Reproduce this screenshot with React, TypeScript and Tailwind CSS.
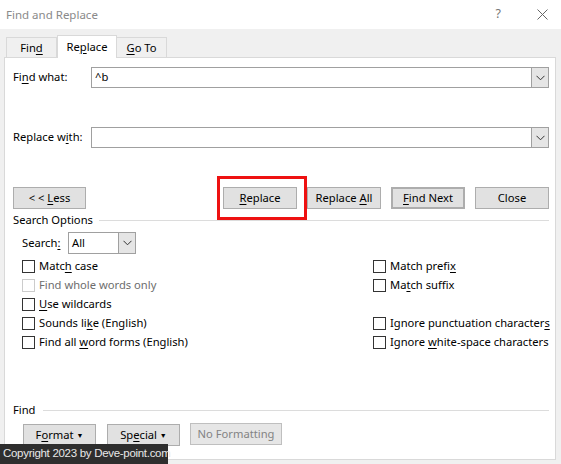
import type { ReactNode } from 'react'

const U = ({ children }: { children: ReactNode }) => (
  <span className="underline underline-offset-[2px] decoration-1">{children}</span>
)

function Chevron() {
  return (
    <svg width="9" height="6" viewBox="0 0 9 6" className="block">
      <path d="M0.5 0.8 L4.5 4.8 L8.5 0.8" fill="none" stroke="#333" strokeWidth="1" />
    </svg>
  )
}

function Btn({ children, className = '' }: { children: ReactNode; className?: string }) {
  return (
    <div
      className={`h-[22px] border border-[#adadad] bg-[#e1e1e1] flex items-center justify-center text-black whitespace-nowrap ${className}`}
    >
      <span>{children}</span>
    </div>
  )
}

function Check({ label, disabled = false }: { label: ReactNode; disabled?: boolean }) {
  return (
    <div className="h-[19px] flex items-center whitespace-nowrap">
      <span
        className={`w-[13px] h-[13px] border bg-white shrink-0 ${disabled ? 'border-[#cccccc]' : 'border-[#333333]'}`}
      />
      <span className={`ml-[4px] ${disabled ? 'text-[#6d6d6d]' : 'text-black'}`}>{label}</span>
    </div>
  )
}

function ComboInput({ value, label }: { value: string; label: ReactNode }) {
  return (
    <div className="flex items-center h-[21px]">
      <div className="w-[78px] whitespace-nowrap">{label}</div>
      <div className="w-[458px] h-[21px] border border-[#a0a0a0] bg-white flex items-center">
        <span className="flex-1 pl-[3px]">{value}</span>
        <div className="w-[17px] h-[19px] border-l border-[#a0a0a0] bg-[#e5e5e5] flex items-center justify-center">
          <Chevron />
        </div>
      </div>
    </div>
  )
}

export default function App() {
  return (
    <div
      className="relative w-[561px] h-[464px] bg-[#f0f0f0] overflow-hidden text-black text-[11.2px]"
      style={{ fontFamily: '"Noto Sans", "Open Sans", sans-serif' }}
    >
      {/* Title bar */}
      <div className="h-[29px] bg-white flex items-center pl-[6px]">
        <span className="text-[11.5px] text-[#8a8a8a]">Find and Replace</span>
        <span className="ml-auto text-[12.5px] text-[#777] mr-[36px]">?</span>
        <svg width="11" height="11" viewBox="0 0 11 11" className="mr-[13px]">
          <path d="M0.5 0.5 L10.5 10.5 M10.5 0.5 L0.5 10.5" stroke="#666" strokeWidth="1" />
        </svg>
      </div>

      {/* Tabs */}
      <div className="h-[28px] flex items-end pl-[6px] relative z-10">
        <div className="w-[51px] h-[20px] border border-b-0 border-[#d9d9d9] flex items-center justify-center pt-[2px]">
          <span>
            Fin<U>d</U>
          </span>
        </div>
        <div className="w-[60px] h-[23px] -mb-px bg-white border border-b-0 border-[#d9d9d9] flex items-center justify-center">
          <span>
            Re<U>p</U>lace
          </span>
        </div>
        <div className="w-[50px] h-[20px] border border-b-0 border-l-0 border-[#d9d9d9] flex items-center justify-center pt-[2px]">
          <span>
            <U>G</U>o To
          </span>
        </div>
      </div>

      {/* Panel */}
      <div className="ml-[4px] w-[552px] h-[403px] bg-white border border-[#d9d9d9] pl-[8px] pr-[6px] flex flex-col">
        <div className="mt-[9px]">
          <ComboInput value="^b" label={<>Fi<U>n</U>d what:</>} />
        </div>
        <div className="mt-[39px]">
          <ComboInput value="" label={<>Replace w<U>i</U>th:</>} />
        </div>

        <div className="mt-[39px] flex items-center">
          <Btn className="w-[73px]">
            &lt; &lt; <U>L</U>ess
          </Btn>
          <div className="ml-auto flex gap-[10px]">
            <div className="relative">
              <Btn className="w-[74px]">
                <U>R</U>eplace
              </Btn>
              <div className="absolute left-[-6px] top-[-11px] w-[90px] h-[44px] border-[3px] border-[#ee1111]" />
            </div>
            <Btn className="w-[74px]">
              Replace <U>A</U>ll
            </Btn>
            <Btn className="w-[74px] border-2 border-[#0078d7]">
              <U>F</U>ind Next
            </Btn>
            <Btn className="w-[74px]">Close</Btn>
          </div>
        </div>

        <div className="mt-[3px] h-[16px] flex items-center">
          <span>Search Options</span>
          <div className="flex-1 ml-[6px] h-px bg-[#dcdcdc]" />
        </div>

        <div className="mt-[4px] pl-[9px] flex items-center h-[22px]">
          <span className="w-[46px]">
            Search<U>:</U>
          </span>
          <div className="w-[68px] h-[22px] border border-[#a0a0a0] bg-white flex items-center">
            <span className="flex-1 pl-[3px]">All</span>
            <div className="w-[17px] h-[20px] border-l border-[#a0a0a0] bg-[#e5e5e5] flex items-center justify-center">
              <Chevron />
            </div>
          </div>
        </div>

        <div className="mt-[3px] pl-[9px] grid grid-cols-[351px_1fr]">
          <Check label={<>Matc<U>h</U> case</>} />
          <Check label={<>Match prefi<U>x</U></>} />
          <Check label="Find whole words only" disabled />
          <Check label={<>Ma<U>t</U>ch suffix</>} />
          <Check label={<><U>U</U>se wildcards</>} />
          <div className="h-[19px]" />
          <Check label={<>Sounds li<U>k</U>e (English)</>} />
          <Check label={<>Ignore punctuation character<U>s</U></>} />
          <Check label={<>Find all <U>w</U>ord forms (English)</>} />
          <Check label={<>Ignore <U>w</U>hite-space characters</>} />
        </div>

        <div className="mt-[50px] h-[16px] flex items-center">
          <span>Find</span>
          <div className="flex-1 ml-[7px] h-px bg-[#dcdcdc]" />
        </div>

        <div className="mt-[6px] pl-[10px] flex items-center gap-[11px]">
          <Btn className="w-[73px]">
            F<U>o</U>rmat <span className="text-[7px] align-[1px]">▼</span>
          </Btn>
          <Btn className="w-[73px]">
            Sp<U>e</U>cial <span className="text-[7px] align-[1px]">▼</span>
          </Btn>
          <div className="w-[92px] h-[22px] -mt-[2px] -ml-px border border-[#bfbfbf] bg-[#e6e6e6] flex items-center justify-center text-[#838383] whitespace-nowrap">
            No Formatting
          </div>
        </div>
      </div>

      {/* Watermark */}
      <div
        className="absolute left-0 bottom-0 w-[168px] h-[20px] bg-[#2e2e2e] flex items-center pl-[3px] text-[11.5px] tracking-[-0.3px] text-[#e8e8e8] whitespace-nowrap"
        style={{ fontFamily: '"Liberation Sans", Arial, sans-serif' }}
      >
        Copyright 2023 by Deve-point.com
      </div>
    </div>
  )
}
